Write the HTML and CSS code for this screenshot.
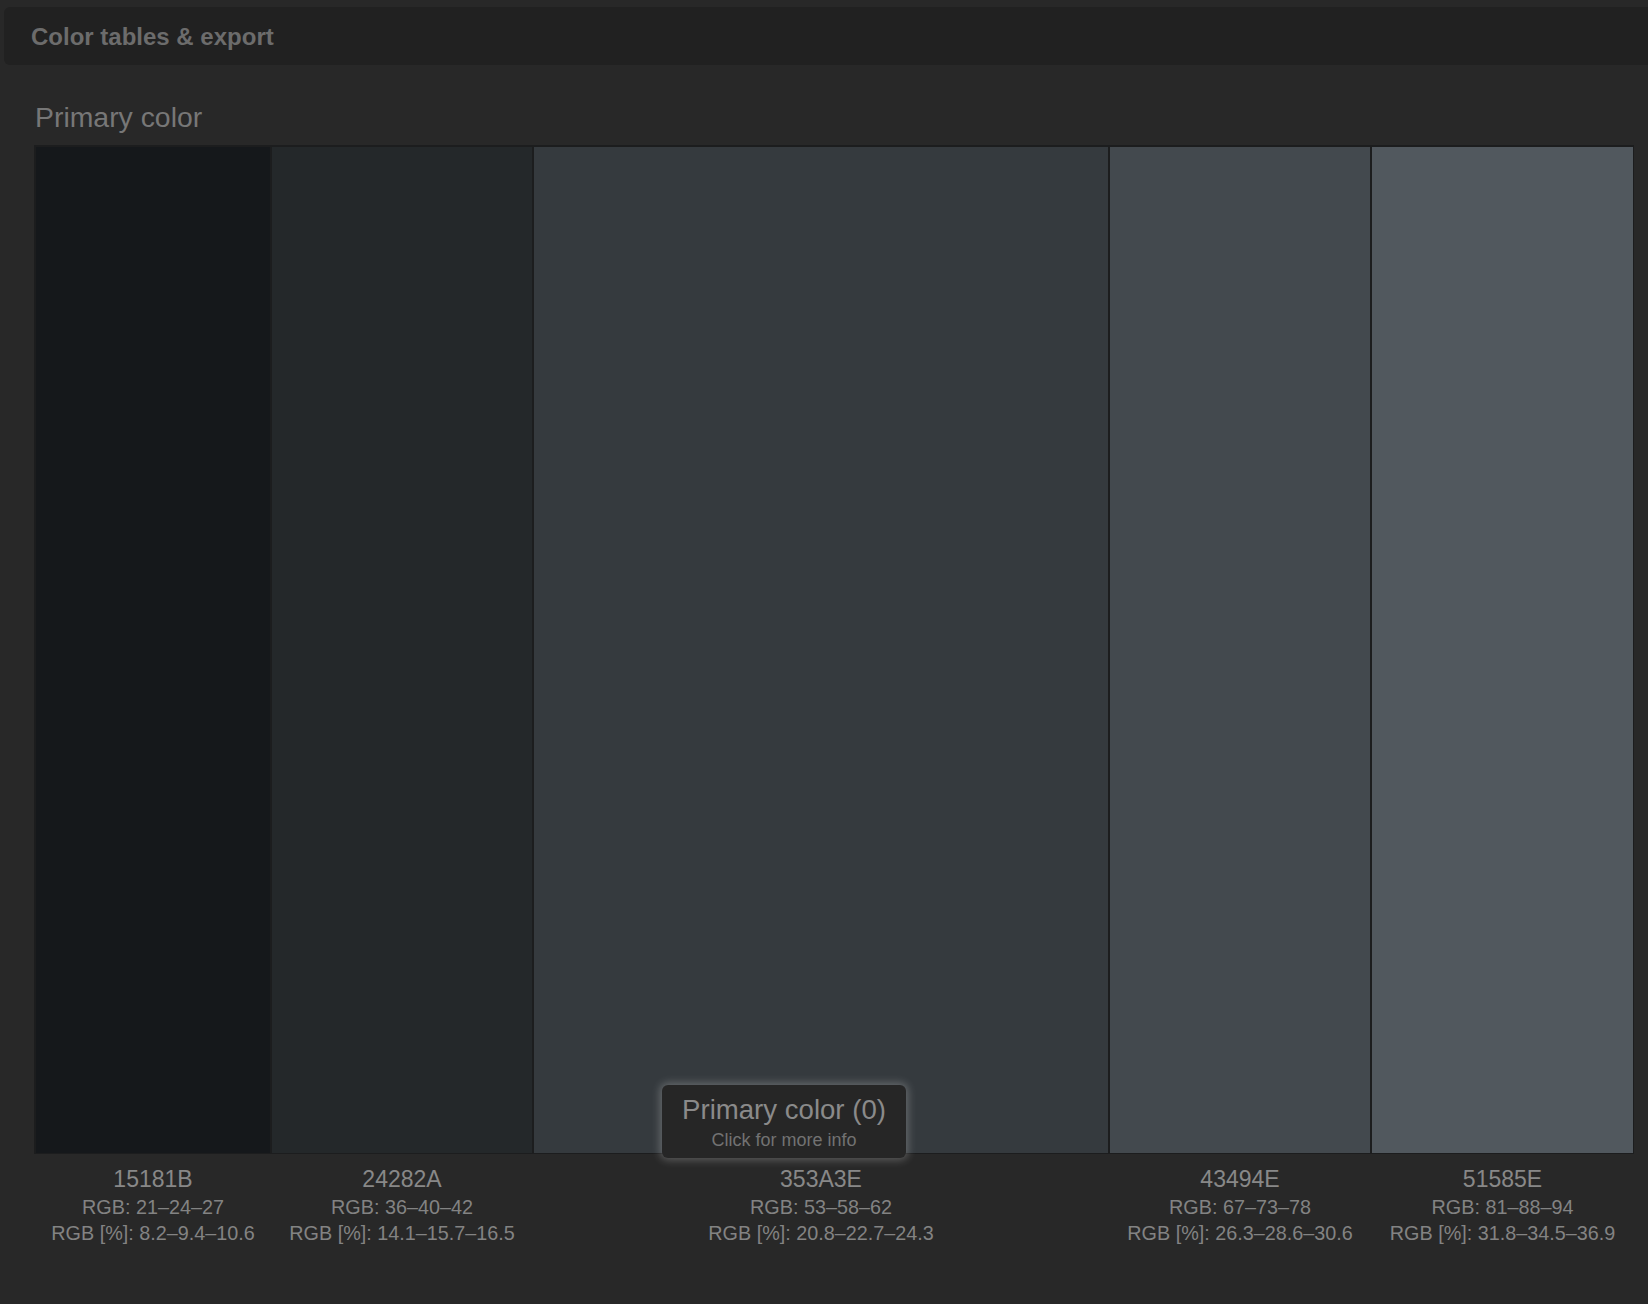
FILE: index.html
```html
<!DOCTYPE html>
<html lang="en">
<head>
<meta charset="utf-8">
<title>Color tables &amp; export</title>
<link rel="stylesheet" href="styles.css">
</head>
<body>
<header class="header">Color tables &amp; export</header>
<section class="section">
  <h2 class="title">Primary color</h2>
  <div class="palette">
    <div class="swatches">
      <div class="swatch c1"></div>
      <div class="swatch c2"></div>
      <div class="swatch c3"></div>
      <div class="swatch c4"></div>
      <div class="swatch c5"></div>
    </div>
    <div class="labels">
      <div class="label">
        <div class="hex">15181B</div>
        <div class="rgb">RGB: 21–24–27</div>
        <div class="rgb pct">RGB [%]: 8.2–9.4–10.6</div>
      </div>
      <div class="label">
        <div class="hex">24282A</div>
        <div class="rgb">RGB: 36–40–42</div>
        <div class="rgb pct">RGB [%]: 14.1–15.7–16.5</div>
      </div>
      <div class="label">
        <div class="hex">353A3E</div>
        <div class="rgb">RGB: 53–58–62</div>
        <div class="rgb pct">RGB [%]: 20.8–22.7–24.3</div>
      </div>
      <div class="label">
        <div class="hex">43494E</div>
        <div class="rgb">RGB: 67–73–78</div>
        <div class="rgb pct">RGB [%]: 26.3–28.6–30.6</div>
      </div>
      <div class="label">
        <div class="hex">51585E</div>
        <div class="rgb">RGB: 81–88–94</div>
        <div class="rgb pct">RGB [%]: 31.8–34.5–36.9</div>
      </div>
    </div>
    <div class="tooltip">
      <div class="tip-title">Primary color (0)</div>
      <div class="tip-sub">Click for more info</div>
    </div>
  </div>
</section>
</body>
</html>
```

FILE: styles.css
```css
html, body {
  margin: 0;
  padding: 0;
}

body {
  background: #282828;
  font-family: "Liberation Sans", Arial, Helvetica, sans-serif;
  width: 1648px;
  height: 1304px;
  overflow: hidden;
}

.header {
  margin: 7px 0 0 4px;
  height: 58px;
  box-sizing: border-box;
  padding: 2px 0 0 27px;
  background: #212121;
  border-radius: 6px 0 0 6px;
  display: flex;
  align-items: center;
  font-size: 24px;
  font-weight: 700;
  color: #6c6c6c;
}

.section {
  padding: 0 14px 0 34px;
}

.title {
  margin: 36px 0 12px 1px;
  font-size: 28.4px;
  line-height: 32px;
  font-weight: 400;
  color: #777777;
}

.palette {
  position: relative;
  width: 1600px;
}

.swatches,
.labels {
  display: grid;
  grid-template-columns: 234px 260px 574px 260px 261px;
  column-gap: 2px;
  padding: 0 1px 0 2px;
}

.swatches {
  background: #1c1d1e;
  padding-top: 2px;
  padding-bottom: 1px;
}

.swatch {
  height: 1006px;
}

.c1 { background: #15181b; }
.c2 { background: #24282a; }
.c3 { background: #353a3e; }
.c4 { background: #43494e; }
.c5 { background: #51585e; }

.labels {
  margin-top: 10px;
}

.label {
  text-align: center;
  color: #858585;
}

.hex {
  font-size: 23px;
  line-height: 31px;
  color: #888888;
}

.rgb {
  font-size: 19.8px;
  line-height: 25px;
  color: #838383;
}

.pct {
  line-height: 27px;
}

.tooltip {
  position: absolute;
  left: 628px;
  top: 940px;
  width: 244px;
  height: 73px;
  box-sizing: border-box;
  padding-top: 10px;
  background: #262626;
  border-radius: 6px;
  box-shadow: 0 0 8px 2px rgba(255, 255, 255, 0.25);
  text-align: center;
}

.tip-title {
  font-size: 27.6px;
  line-height: 30px;
  color: #8a8a8a;
}

.tip-sub {
  margin-top: 4px;
  font-size: 18px;
  line-height: 22px;
  color: #727272;
}
```
